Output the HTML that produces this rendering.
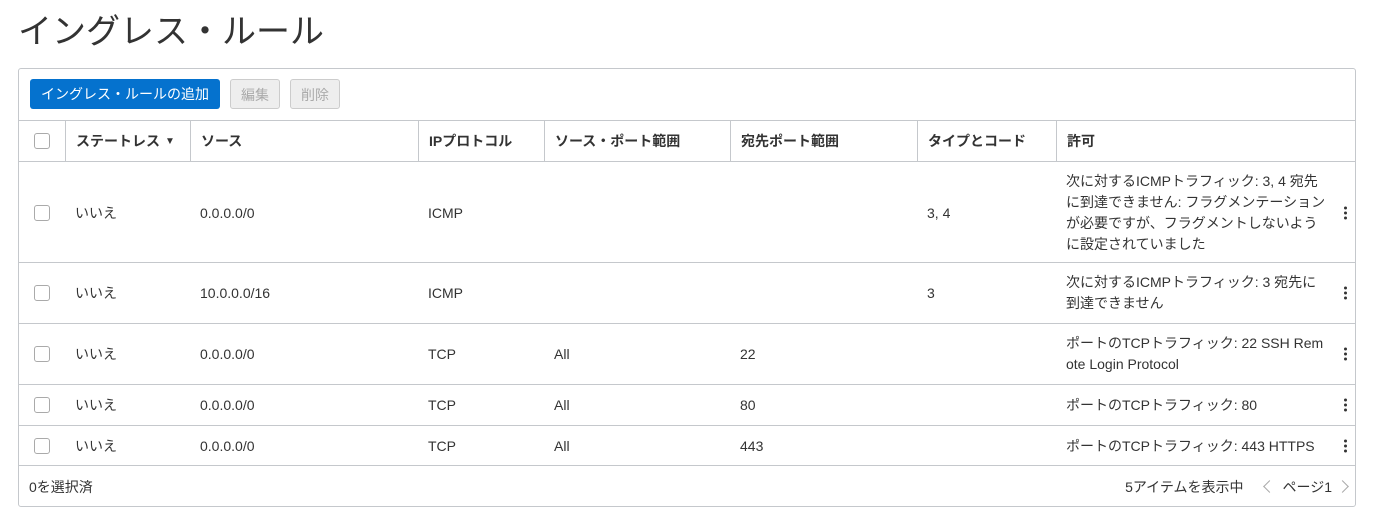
<!DOCTYPE html>
<html><head><meta charset="utf-8"><style>
body{margin:0;background:#fff;font-family:"Liberation Sans","Noto Sans CJK JP",sans-serif;color:#333;font-size:14px;width:1374px;height:520px;overflow:hidden;position:relative}
h1{position:absolute;left:18px;top:9px;margin:0;font-size:34px;font-weight:normal;color:#333;line-height:46px}
.card{position:absolute;left:18px;top:68px;width:1336px;height:437px;border:1px solid #c5c8cc;border-radius:3px}
.btn{position:absolute;top:10px;height:30px;line-height:30px;border-radius:3px;font-size:14px;text-align:center;box-sizing:border-box}
.pri{left:11px;width:190px;background:#0572ce;color:#fff}
.dis{background:#eee;border:1px solid #ccc;color:#aaa;width:50px}
.row{position:absolute;left:0;width:1336px;border-top:1px solid #c5c8cc}
.c{position:absolute;top:0;height:100%;display:flex;align-items:center;box-sizing:border-box;padding-left:10px}
.hd .c{border-left:1px solid #c5c8cc;font-weight:bold}
.hd .c:first-child{border-left:none}
.cb{width:14px;height:14px;border:1px solid #aaa;border-radius:3px;margin-left:5px;background:#fff}
.perm{line-height:21px}
.k{position:absolute;right:8px;top:50%;transform:translateY(-50%);width:3px}
.k i{display:block;width:3px;height:3px;background:#333;border-radius:50%;margin:2px 0}
.ch{display:inline-block;width:8px;height:8px;border-left:1.5px solid #aaa;border-bottom:1.5px solid #aaa}
</style></head><body>
<h1>イングレス・ルール</h1>
<div class="card">
<div class="btn pri">イングレス・ルールの追加</div>
<div class="btn dis" style="left:211px">編集</div>
<div class="btn dis" style="left:271px">削除</div>
<div class="row hd" style="top:51px;height:40px">
<div class="c" style="left:0;width:46px"><div class="cb"></div></div>
<div class="c" style="left:46px;width:125px">ステートレス <span style="font-size:10px;margin-left:5px">▼</span></div>
<div class="c" style="left:171px;width:228px">ソース</div>
<div class="c" style="left:399px;width:126px">IPプロトコル</div>
<div class="c" style="left:525px;width:186px">ソース・ポート範囲</div>
<div class="c" style="left:711px;width:187px">宛先ポート範囲</div>
<div class="c" style="left:898px;width:139px">タイプとコード</div>
<div class="c" style="left:1037px;width:299px">許可</div>
</div>
<div class="row" style="top:92px;height:101px">
<div class="c" style="left:0;width:46px"><div class="cb"></div></div>
<div class="c" style="left:46px">いいえ</div><div class="c" style="left:171px">0.0.0.0/0</div><div class="c" style="left:399px">ICMP</div><div class="c" style="left:898px">3, 4</div>
<div class="c perm" style="left:1037px;width:270px">次に対するICMPトラフィック: 3, 4 宛先に到達できません: フラグメンテーションが必要ですが、フラグメントしないように設定されていました</div>
<div class="k"><i></i><i></i><i></i></div></div>
<div class="row" style="top:193px;height:60px">
<div class="c" style="left:0;width:46px"><div class="cb"></div></div>
<div class="c" style="left:46px">いいえ</div><div class="c" style="left:171px">10.0.0.0/16</div><div class="c" style="left:399px">ICMP</div><div class="c" style="left:898px">3</div>
<div class="c perm" style="left:1037px;width:270px">次に対するICMPトラフィック: 3 宛先に到達できません</div>
<div class="k"><i></i><i></i><i></i></div></div>
<div class="row" style="top:254px;height:60px">
<div class="c" style="left:0;width:46px"><div class="cb"></div></div>
<div class="c" style="left:46px">いいえ</div><div class="c" style="left:171px">0.0.0.0/0</div><div class="c" style="left:399px">TCP</div><div class="c" style="left:525px">All</div><div class="c" style="left:711px">22</div>
<div class="c perm" style="left:1037px;width:270px;word-break:break-all">ポートのTCPトラフィック: 22 SSH Remote Login Protocol</div>
<div class="k"><i></i><i></i><i></i></div></div>
<div class="row" style="top:315px;height:40px">
<div class="c" style="left:0;width:46px"><div class="cb"></div></div>
<div class="c" style="left:46px">いいえ</div><div class="c" style="left:171px">0.0.0.0/0</div><div class="c" style="left:399px">TCP</div><div class="c" style="left:525px">All</div><div class="c" style="left:711px">80</div>
<div class="c perm" style="left:1037px">ポートのTCPトラフィック: 80</div>
<div class="k"><i></i><i></i><i></i></div></div>
<div class="row" style="top:356px;height:40px">
<div class="c" style="left:0;width:46px"><div class="cb"></div></div>
<div class="c" style="left:46px">いいえ</div><div class="c" style="left:171px">0.0.0.0/0</div><div class="c" style="left:399px">TCP</div><div class="c" style="left:525px">All</div><div class="c" style="left:711px">443</div>
<div class="c perm" style="left:1037px">ポートのTCPトラフィック: 443 HTTPS</div>
<div class="k"><i></i><i></i><i></i></div></div>
<div class="row" style="top:396px;height:41px">
<div class="c" style="left:0">0を選択済</div>
<div class="c" style="right:8px;padding:0;color:#333">5アイテムを表示中<span class="ch" style="transform:rotate(45deg);margin:0 8px 0 22px"></span>ページ1<span class="ch" style="transform:rotate(-135deg);margin-left:6px"></span></div>
</div>
</div>
</body></html>
